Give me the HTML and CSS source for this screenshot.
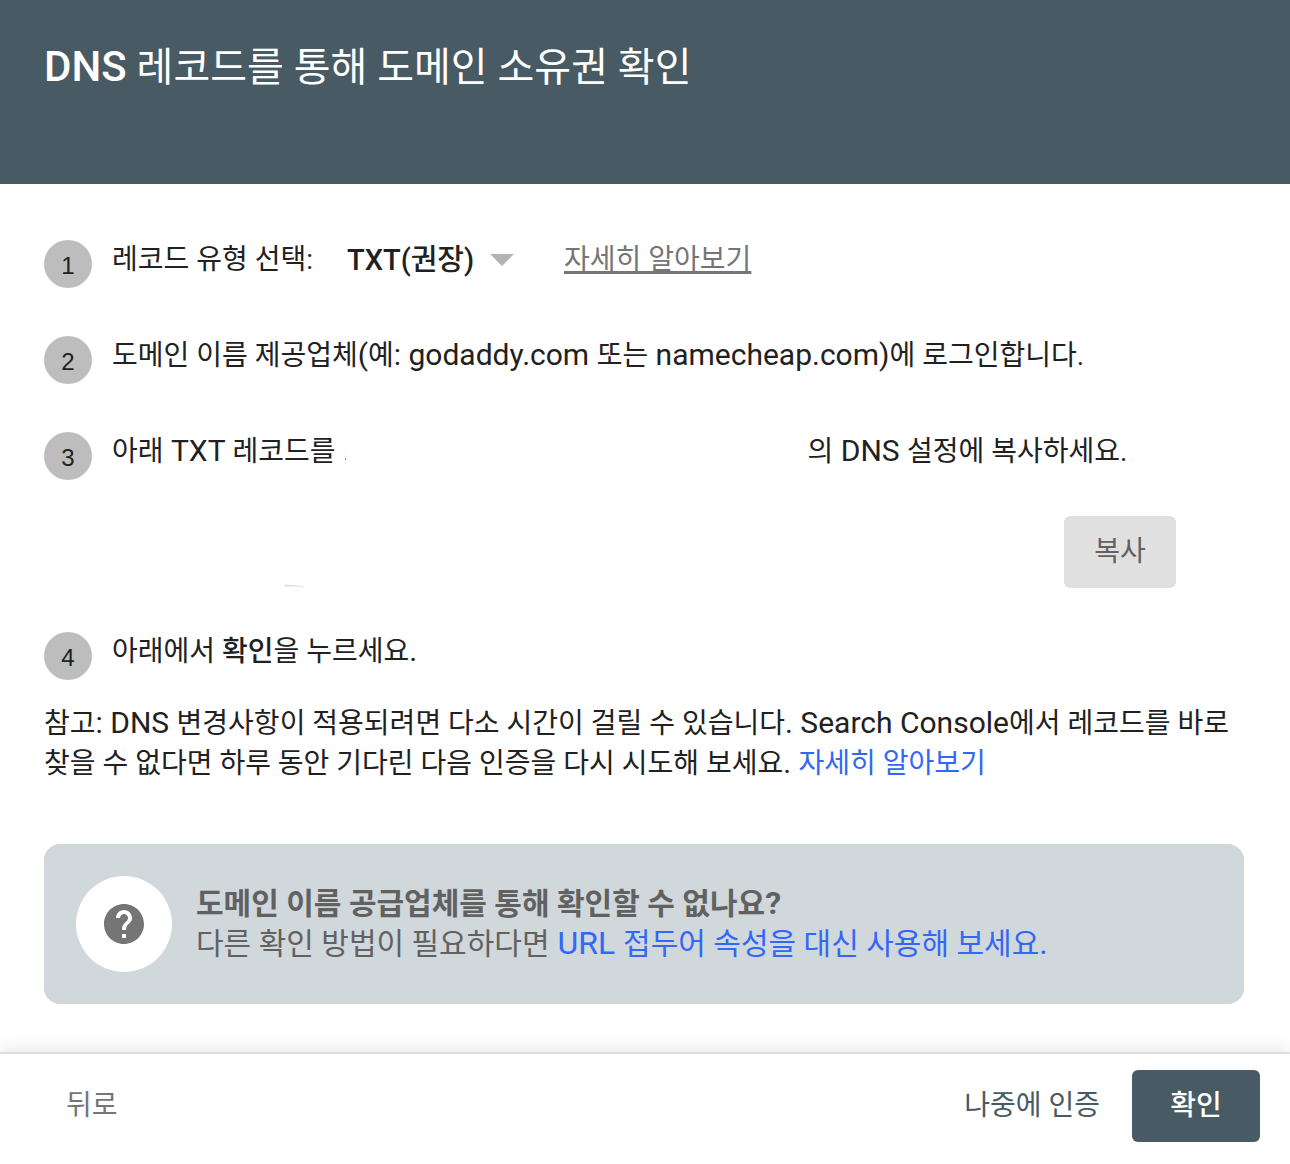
FILE: index.html
```
<!DOCTYPE html>
<html lang="ko">
<head>
  <meta charset="utf-8">
  <meta name="viewport" content="width=device-width, initial-scale=1">
  <title>DNS 레코드를 통해 도메인 소유권 확인</title>
  <link rel="stylesheet" href="styles.css">
</head>
<body>
  <div class="dialog">
    <header class="dialog-header">
      <h1 class="dialog-title"><span class="latin">DNS</span> 레코드를 통해 도메인 소유권 확인</h1>
    </header>

    <main class="dialog-body">
      <ol class="steps">
        <li class="step">
          <span class="step-number">1</span>
          <div class="step-content type-row">
            <label for="record-type">레코드 유형 선택:</label>
            <span class="select-wrap">
              <select id="record-type" class="record-type">
                <option>TXT(권장)</option>
              </select>
              <svg class="select-arrow" viewBox="0 0 24 12" aria-hidden="true"><path d="M0 0h24L12 12z"/></svg>
            </span>
            <a class="help-link" href="#record-help">자세히 알아보기</a>
          </div>
        </li>
        <li class="step">
          <span class="step-number">2</span>
          <p class="step-content">도메인 이름 제공업체<span class="latin">(</span>예<span class="latin">: godaddy.com </span>또는<span class="latin"> namecheap.com)</span>에 로그인합니다.</p>
        </li>
        <li class="step step-record">
          <span class="step-number">3</span>
          <div class="step-content">
            <p class="record-text">
              <span>아래<span class="latin"> TXT </span>레코드를</span>
              <span class="domain-blank"><svg class="domain-trace" viewBox="0 0 3 12" aria-hidden="true"><path d="M1 3h1v1H1z" fill="#ddd"/><path d="M1 9h1v2H1z" fill="#888"/></svg></span>
              <span>의<span class="latin"> DNS </span>설정에 복사하세요.</span>
            </p>
            <div class="record-row">
              <div class="record-value"><svg class="record-trace" viewBox="0 0 24 3" aria-hidden="true"><path d="M0 0l24 2H0z" fill="#dcdcdc"/></svg></div>
              <button class="button button-copy" type="button">복사</button>
            </div>
          </div>
        </li>
        <li class="step">
          <span class="step-number">4</span>
          <p class="step-content">아래에서 <strong class="medium">확인</strong>을 누르세요<span class="latin">.</span></p>
        </li>
      </ol>

      <p class="note">참고<span class="latin">: DNS </span>변경사항이 적용되려면 다소 시간이 걸릴 수 있습니다<span class="latin">. Search Console</span>에서 레코드를 바로 찾을 수 없다면 하루 동안 기다린 다음 인증을 다시 시도해 보세요<span class="latin">. </span><a class="link" href="#verify-help">자세히 알아보기</a></p>

      <section class="callout">
        <span class="callout-icon">
          <svg viewBox="0 0 24 24" width="48" height="48" aria-hidden="true"><path d="M12 2C6.48 2 2 6.48 2 12s4.48 10 10 10 10-4.48 10-10S17.52 2 12 2zm1 17h-2v-2h2v2zm2.07-7.75l-.9.92C13.45 12.9 13 13.5 13 15h-2v-.5c0-1.1.45-2.1 1.17-2.83l1.24-1.26c.37-.36.59-.86.59-1.41 0-1.1-.9-2-2-2s-2 .9-2 2H8c0-2.21 1.79-4 4-4s4 1.79 4 4c0 .88-.36 1.68-.93 2.25z"/></svg>
        </span>
        <div>
          <h2 class="callout-title">도메인 이름 공급업체를 통해 확인할 수 없나요<span class="latin">?</span></h2>
          <p class="callout-text">다른 확인 방법이 필요하다면<span class="latin"> </span><a class="link" href="#url-prefix"><span class="latin">URL </span>접두어 속성을 대신 사용해 보세요<span class="latin">.</span></a></p>
        </div>
      </section>
    </main>

    <footer class="dialog-footer">
      <button class="button button-back" type="button">뒤로</button>
      <button class="button button-later" type="button">나중에 인증</button>
      <button class="button button-verify" type="button">확인</button>
    </footer>
  </div>
</body>
</html>
```

FILE: styles.css
```
* {
  box-sizing: border-box;
}

body {
  margin: 0;
  background: #fff;
  color: #212121;
  font-family: Roboto, "Noto Sans CJK KR", sans-serif;
  font-size: 28px;
  line-height: 40px;
  word-break: keep-all;
}

h1, h2, p, ol {
  margin: 0;
  padding: 0;
}

.dialog {
  display: flex;
  flex-direction: column;
  min-height: 100vh;
}

/* Latin letters are set slightly larger than the Hangul beside them */
.latin {
  font-size: 30px;
  line-height: 1;
}

.medium {
  font-weight: 500;
}

.dialog-header {
  min-height: 184px;
  padding: 44px;
  background: #485a63;
  color: #fff;
}

.dialog-title {
  font-size: 40px;
  font-weight: 400;
  line-height: 48px;
}

.dialog-title .latin {
  font-size: 42px;
  font-weight: 500;
}

.dialog-body {
  flex: 1;
  padding: 56px 46px 48px 44px;
}

.steps {
  list-style: none;
}

.step {
  display: flex;
  gap: 20px;
  margin-bottom: 48px;
}

.step-record {
  margin-bottom: 44px;
}

.step:last-child {
  margin-bottom: 24px;
}

.step-number {
  flex: none;
  width: 48px;
  height: 48px;
  padding-top: 2px;
  border-radius: 50%;
  background: #bdbdbd;
  font-family: "Liberation Sans", sans-serif;
  font-size: 24px;
  line-height: 48px;
  text-align: center;
}

.step-content {
  flex: 1;
}

.type-row {
  display: flex;
  align-items: flex-start;
}

.select-wrap {
  display: flex;
  align-items: center;
  margin: 0 50px 0 34px;
}

.record-type {
  appearance: none;
  height: 40px;
  padding: 0;
  border: 0;
  background: none;
  color: inherit;
  font: inherit;
  font-size: 29px;
  font-weight: 500;
}

.select-arrow {
  width: 24px;
  height: 12px;
  margin-left: 15px;
  fill: #b3b3b3;
}

.help-link {
  color: #757575;
  text-decoration-thickness: 3px;
  text-underline-offset: 2px;
}

.record-text {
  display: flex;
  height: 48px;
}

.domain-blank {
  width: 472px;
  padding-left: 9px;
}

.domain-trace {
  width: 3px;
  height: 12px;
}

.record-row {
  display: flex;
  justify-content: space-between;
  margin-top: 36px;
  padding-right: 68px;
}

.record-value {
  display: flex;
  flex: 1;
  align-items: flex-end;
  padding-left: 173px;
}

.record-trace {
  width: 24px;
  height: 4px;
}

.button {
  height: 72px;
  padding: 0 28px;
  border: 0;
  border-radius: 6px;
  background: none;
  font: inherit;
  cursor: pointer;
}

.button-copy {
  width: 112px;
  background: #e0e0e0;
  color: #616161;
}

.link {
  color: #3367f6;
  text-decoration: none;
}

.callout {
  display: flex;
  align-items: center;
  gap: 24px;
  min-height: 160px;
  margin-top: 60px;
  padding: 32px;
  border-radius: 16px;
  background: #d0d8dc;
  color: #616161;
}

.callout-icon {
  display: flex;
  flex: none;
  align-items: center;
  justify-content: center;
  width: 96px;
  height: 96px;
  border-radius: 50%;
  background: #fff;
  fill: #757575;
}

.callout-title,
.callout-text {
  font-size: 30px;
  line-height: 40px;
}

.callout .latin {
  font-size: 32px;
}

.dialog-footer {
  display: flex;
  align-items: center;
  padding: 16px 30px 22px 38px;
  border-top: 2px solid #dedede;
  box-shadow: 0 0 20px rgba(0, 0, 0, 0.12);
}

.button-back {
  margin-right: auto;
  color: #757575;
}

.button-later {
  margin-right: 4px;
  color: #485a63;
}

.button-verify {
  width: 128px;
  background: #485a63;
  color: #fff;
  font-weight: 500;
}
```
